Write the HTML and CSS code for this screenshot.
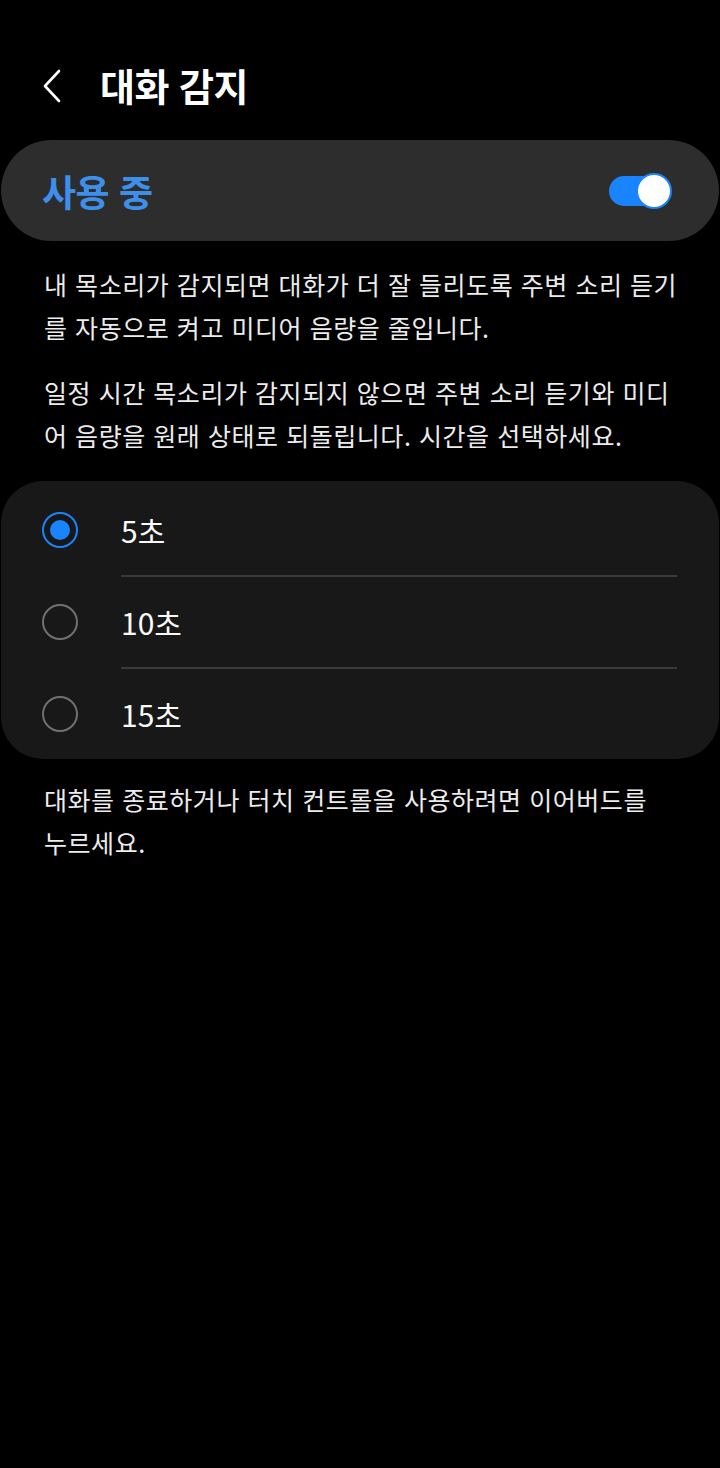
FILE: index.html
```html
<!DOCTYPE html>
<html lang="ko">
<head>
    <meta charset="UTF-8">
    <meta name="viewport" content="width=device-width, initial-scale=1.0">
    <title>대화 감지</title>
    <link rel="stylesheet" href="styles.css">
</head>
<body>
    <header class="app-bar">
        <button class="back-btn" aria-label="뒤로">
            <svg width="22" height="36" viewBox="0 0 22 36">
                <polyline points="17,3 3,18 17,33" fill="none" stroke="#fff" stroke-width="2.6" stroke-linecap="round" stroke-linejoin="round"/>
            </svg>
        </button>
        <h1 class="title">대화 감지</h1>
    </header>

    <div class="master-switch">
        <span class="switch-label">사용 중</span>
        <span class="toggle on"><span class="thumb"></span></span>
    </div>

    <div class="desc">
        <p>내 목소리가 감지되면 대화가 더 잘 들리도록 주변 소리 듣기를 자동으로 켜고 미디어 음량을 줄입니다.</p>
        <p>일정 시간 목소리가 감지되지 않으면 주변 소리 듣기와 미디어 음량을 원래 상태로 되돌립니다. 시간을 선택하세요.</p>
    </div>

    <div class="options">
        <label class="option">
            <span class="radio checked"></span>
            <span class="option-text">5초</span>
        </label>
        <div class="divider"></div>
        <label class="option">
            <span class="radio"></span>
            <span class="option-text">10초</span>
        </label>
        <div class="divider"></div>
        <label class="option">
            <span class="radio"></span>
            <span class="option-text">15초</span>
        </label>
    </div>

    <div class="desc footer">
        <p>대화를 종료하거나 터치 컨트롤을 사용하려면 이어버드를 누르세요.</p>
    </div>
</body>
</html>
```

FILE: styles.css
```css
body {
    margin: 0;
    background-color: #000;
    color: #ececec;
    font-family: "Noto Sans CJK KR", "Noto Sans", sans-serif;
}

.app-bar {
    display: flex;
    align-items: center;
    height: 80px;
    margin-top: 46px;
    padding-left: 42px;
}

.back-btn {
    display: flex;
    align-items: center;
    background: none;
    border: none;
    padding: 0;
    width: 58px;
    cursor: pointer;
}

.title {
    margin: 0 0 4px;
    font-size: 38px;
    font-weight: 700;
    color: #fff;
    letter-spacing: -0.5px;
}

.master-switch {
    display: flex;
    align-items: center;
    justify-content: space-between;
    height: 101px;
    margin: 14px 1px 0;
    padding: 0 47px 0 41px;
    background-color: #2d2d2d;
    border-radius: 51px;
}

.switch-label {
    font-size: 37px;
    font-weight: 700;
    color: #3e8fea;
    letter-spacing: -0.5px;
}

.toggle {
    position: relative;
    display: block;
    width: 63px;
    height: 36px;
}

.toggle::before {
    content: "";
    position: absolute;
    left: 0;
    top: 3px;
    width: 54px;
    height: 30px;
    border-radius: 15px;
    background-color: #1a84ff;
}

.toggle .thumb {
    position: absolute;
    right: 0;
    top: 0;
    width: 32px;
    height: 32px;
    border-radius: 50%;
    background-color: #fff;
    border: 2px solid #1a84ff;
}

.desc {
    padding: 22px 40px 0 44px;
}

.desc p {
    margin: 0 0 22px;
    font-size: 25px;
    line-height: 43px;
    letter-spacing: 0.55px;
}

.options {
    margin: 24px 1px 0;
    padding-top: 3px;
    background-color: #181818;
    border-radius: 42px;
}

.option {
    display: flex;
    align-items: center;
    height: 90px;
    padding-left: 41px;
}

.option:first-child {
    height: 91px;
}

.radio {
    box-sizing: border-box;
    display: flex;
    align-items: center;
    justify-content: center;
    width: 36px;
    height: 36px;
    margin-right: 43px;
    border-radius: 50%;
    border: 2px solid #707070;
}

.radio.checked {
    border-color: #1a84ff;
}

.radio.checked::after {
    content: "";
    width: 20px;
    height: 20px;
    border-radius: 50%;
    background-color: #1a84ff;
}

.option-text {
    font-size: 30px;
    color: #fafafa;
}

.divider {
    height: 2px;
    margin: 0 42px 0 120px;
    background-color: #3a3a3a;
}

.footer {
    padding-top: 19px;
    padding-right: 64px;
}
```
